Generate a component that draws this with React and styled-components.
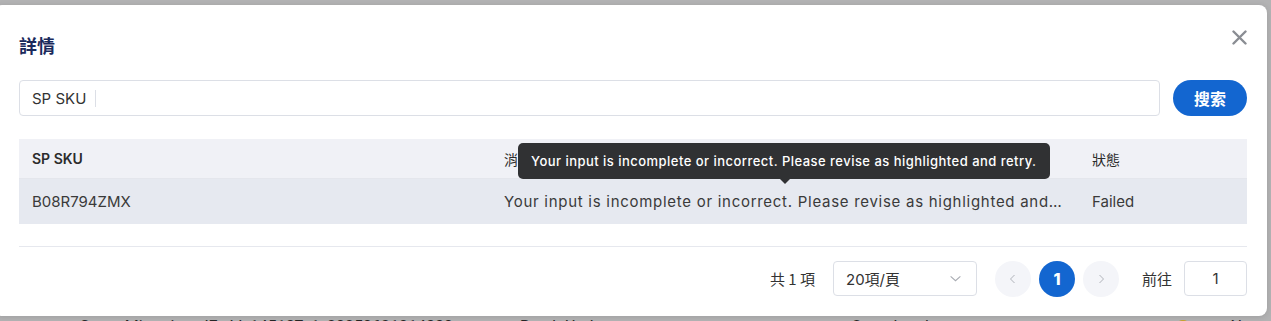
import React from 'react';
import styled, { createGlobalStyle } from 'styled-components';

const GlobalStyle = createGlobalStyle`
  html, body {
    margin: 0;
    padding: 0;
    background: #b3b3b4;
    overflow: hidden;
  }
  * {
    box-sizing: border-box;
  }
`;

const latin = `Inter, "Noto Sans CJK TC", sans-serif`;

const Screen = styled.div`
  width: 1271px;
  height: 321px;
  overflow: hidden;
  font-family: ${latin};
`;

const Modal = styled.div`
  position: relative;
  width: 1273px;
  margin: 5px 0 0 -6px;
  padding: 28px 20px 20px 25px;
  background: #ffffff;
  border-radius: 8px;
  box-shadow: 0 1px 6px rgba(0, 0, 0, 0.12);
`;

const Header = styled.div`
  display: flex;
  justify-content: space-between;
  align-items: flex-start;
  height: 24px;
`;

const Title = styled.h2`
  margin: 0;
  font-family: "Noto Sans CJK TC", sans-serif;
  font-size: 18px;
  line-height: 24px;
  font-weight: 700;
  color: #1b2a5c;
`;

const CloseButton = styled.button`
  margin: -4px 0 0;
  padding: 0;
  width: 16px;
  height: 16px;
  border: none;
  background: transparent;
  cursor: pointer;
  display: flex;
  align-items: center;
  justify-content: center;
`;

const SearchRow = styled.div`
  display: flex;
  gap: 13px;
  margin-top: 23px;
  height: 36px;
`;

const SearchBox = styled.div`
  flex: 1;
  display: flex;
  align-items: center;
  border: 1px solid #dcdfe6;
  border-radius: 4px;
  padding: 0 12px;
`;

const SearchLabel = styled.span`
  font-size: 15px;
  color: #333;
  padding-right: 9px;
  border-right: 1px solid #dcdfe6;
  line-height: 17px;
`;

const SearchInput = styled.input`
  flex: 1;
  border: none;
  outline: none;
  height: 100%;
  font-family: inherit;
  font-size: 15px;
  padding-left: 10px;
`;

const SearchButton = styled.button`
  width: 74px;
  border: none;
  border-radius: 18px;
  background: #1366d0;
  color: #fff;
  font-family: "Noto Sans CJK TC", sans-serif;
  font-size: 16px;
  font-weight: 700;
  cursor: pointer;
`;

const TableWrap = styled.div`
  position: relative;
  margin-top: 23px;
`;

const Table = styled.div`
  display: grid;
  grid-template-columns: 472px 588px 1fr;
`;

const Cell = styled.div`
  padding: 0 13px;
  display: flex;
  align-items: center;
  min-width: 0;
  height: ${(p) => (p.$head ? '40px' : '45px')};
  background: ${(p) => (p.$head ? '#f0f1f6' : '#e6e9f0')};
  border-bottom: ${(p) => (p.$head ? '1px solid #e4e6ec' : 'none')};
  color: ${(p) => (p.$head ? '#2b2b2b' : '#3a3a3a')};
  font-size: ${(p) => (p.$head ? '14px' : '15px')};
  font-weight: ${(p) => (p.$bold ? 600 : 400)};
`;

const Ellipsis = styled.span`
  white-space: nowrap;
  overflow: hidden;
  text-overflow: ellipsis;
  letter-spacing: 0.72px;
`;

const Tooltip = styled.div`
  position: absolute;
  left: 499px;
  top: 4px;
  width: 532px;
  height: 36px;
  padding: 0 13px;
  display: flex;
  align-items: center;
  background: #303133;
  color: #fff;
  border-radius: 5px;
  font-size: 13px;
  font-weight: 500;
  letter-spacing: 0.47px;
  white-space: nowrap;

  &::after {
    content: '';
    position: absolute;
    left: 262px;
    bottom: -5px;
    border-left: 5px solid transparent;
    border-right: 5px solid transparent;
    border-top: 5px solid #303133;
  }
`;

const Divider = styled.div`
  margin-top: 22px;
  height: 1px;
  background: #e6e8ee;
`;

const Footer = styled.div`
  margin-top: 14px;
  height: 35px;
  display: flex;
  justify-content: flex-end;
  align-items: center;
`;

const Total = styled.span`
  font-family: "Noto Sans CJK TC", sans-serif;
  font-size: 15px;
  color: #333;
  margin-right: 18px;
`;

const SizeSelect = styled.div`
  width: 144px;
  height: 35px;
  border: 1px solid #dcdfe6;
  border-radius: 4px;
  padding: 0 14px 0 12px;
  display: flex;
  align-items: center;
  justify-content: space-between;
  font-size: 15px;
  color: #333;
  margin-right: 18px;
`;

const Pager = styled.div`
  display: flex;
  gap: 8px;
  margin-right: 23px;
`;

const PageBtn = styled.button`
  width: 36px;
  height: 36px;
  border-radius: 50%;
  border: none;
  padding: 0;
  display: flex;
  align-items: center;
  justify-content: center;
  background: ${(p) => (p.$active ? '#1366d0' : '#f4f5f9')};
  color: #fff;
  font-family: ${latin};
  font-size: 16px;
  font-weight: 800;
`;

const JumpLabel = styled.span`
  font-family: "Noto Sans CJK TC", sans-serif;
  font-size: 15px;
  color: #333;
  margin-right: 12px;
`;

const JumpInput = styled.div`
  width: 63px;
  height: 35px;
  border: 1px solid #dcdfe6;
  border-radius: 4px;
  display: flex;
  align-items: center;
  justify-content: center;
  font-size: 15px;
  color: #333;
`;

const BgRow = styled.div`
  display: grid;
  grid-template-columns: 80px 440px 331px 324px 47px 1fr;
  align-items: start;
  padding-top: 1px;
  font-family: Roboto, sans-serif;
  font-size: 16px;
  line-height: 20px;
  color: #262626;
  white-space: nowrap;
`;

const BgCell = styled.div`
  overflow: hidden;
`;

const Dot = styled.span`
  display: block;
  width: 16px;
  height: 16px;
  margin-top: 3px;
  border-radius: 50%;
  background: #c9a327;
`;

const Chevron = ({ dir, color = '#b0b3ba', size = 12 }) => (
  <svg width={size} height={size} viewBox="0 0 12 12" fill="none">
    {dir === 'left' && <polyline points="7.5,2 3.5,6 7.5,10" stroke={color} strokeWidth="1" />}
    {dir === 'right' && <polyline points="4.5,2 8.5,6 4.5,10" stroke={color} strokeWidth="1" />}
    {dir === 'down' && <polyline points="1.5,4 6,8 10.5,4" stroke={color} strokeWidth="1" />}
  </svg>
);

const message = 'Your input is incomplete or incorrect. Please revise as highlighted and retry.';

export default function App() {
  return (
    <Screen>
      <GlobalStyle />
      <Modal>
        <Header>
          <Title>詳情</Title>
          <CloseButton aria-label="close">
            <svg width="15" height="15" viewBox="0 0 15 15">
              <path d="M1.5 1.5 L13.5 13.5 M13.5 1.5 L1.5 13.5" stroke="#8a8d93" strokeWidth="2.4" strokeLinecap="round" />
            </svg>
          </CloseButton>
        </Header>

        <SearchRow>
          <SearchBox>
            <SearchLabel>SP SKU</SearchLabel>
            <SearchInput />
          </SearchBox>
          <SearchButton>搜索</SearchButton>
        </SearchRow>

        <TableWrap>
          <Table>
            <Cell $head $bold>SP SKU</Cell>
            <Cell $head>消息</Cell>
            <Cell $head>狀態</Cell>
            <Cell>B08R794ZMX</Cell>
            <Cell><Ellipsis>{message}</Ellipsis></Cell>
            <Cell>Failed</Cell>
          </Table>
          <Tooltip>{message}</Tooltip>
        </TableWrap>

        <Divider />

        <Footer>
          <Total>共 1 項</Total>
          <SizeSelect>
            <span>20項/頁</span>
            <Chevron dir="down" color="#a8abb2" size={13} />
          </SizeSelect>
          <Pager>
            <PageBtn><Chevron dir="left" /></PageBtn>
            <PageBtn $active>1</PageBtn>
            <PageBtn><Chevron dir="right" /></PageBtn>
          </Pager>
          <JumpLabel>前往</JumpLabel>
          <JumpInput>1</JumpInput>
        </Footer>
      </Modal>

      <BgRow>
        <BgCell>e</BgCell>
        <BgCell>Store_Migration_JE_JJ_145137_1_20250621014330</BgCell>
        <BgCell>Batch Update</BgCell>
        <BgCell>Completed</BgCell>
        <BgCell><Dot /></BgCell>
        <BgCell>eNew</BgCell>
      </BgRow>
    </Screen>
  );
}
